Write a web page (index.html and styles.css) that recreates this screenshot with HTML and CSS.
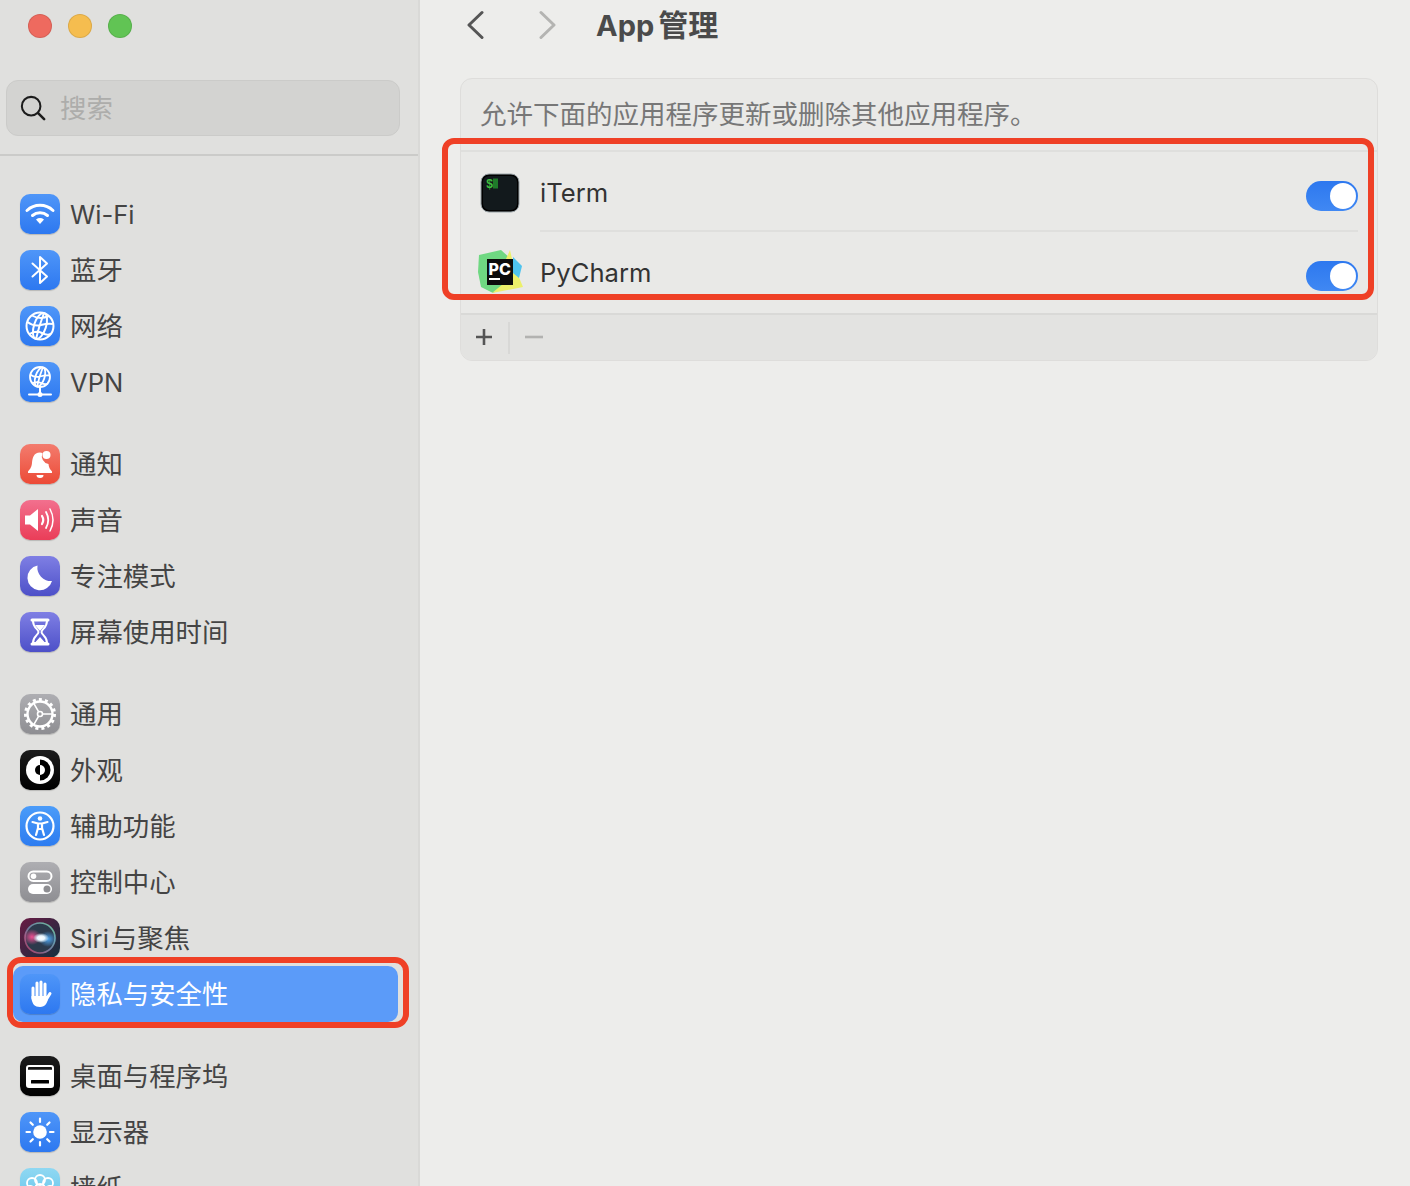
FILE: index.html
```html
<!DOCTYPE html>
<html lang="zh-CN">
<head>
<meta charset="utf-8">
<title>App 管理</title>
<link rel="stylesheet" href="styles.css">
</head>
<body>
<div class="window">
  <aside class="sidebar">
    <div class="lights">
      <span class="light red"></span><span class="light yellow"></span><span class="light green"></span>
    </div>
    <div class="search">
      <svg class="search-icon" viewBox="0 0 28 28" width="26" height="26"><circle cx="12" cy="12" r="10" fill="none" stroke="#1c1c1c" stroke-width="2.2"/><path d="M19.5 19.5 L26 26" stroke="#1c1c1c" stroke-width="2.8" stroke-linecap="round"/></svg>
      <span class="search-text">搜索</span>
    </div>
    <div class="rule"></div>
    <nav class="nav">
      <div class="group">
        <div class="row"><span class="ico blue"><svg viewBox="0 0 40 40"><g fill="none" stroke="#fff" stroke-width="3" stroke-linecap="round"><path d="M7 16.5 A19 19 0 0 1 33 16.5"/><path d="M12.5 21.5 A11.5 11.5 0 0 1 27.5 21.5"/></g><path d="M16 25.5 A7 7 0 0 1 24 25.5 L20 30Z" fill="#fff"/></svg></span><span class="label lat">Wi-Fi</span></div>
        <div class="row"><span class="ico blue"><svg viewBox="0 0 40 40"><path d="M12.5 13.5 L27 26.5 L20 33 V7 L27 13.5 L12.5 26.5" fill="none" stroke="#fff" stroke-width="2" stroke-linejoin="round" stroke-linecap="round"/></svg></span><span class="label">蓝牙</span></div>
        <div class="row"><span class="ico blue"><svg viewBox="0 0 40 40"><g fill="none" stroke="#fff" stroke-width="2"><circle cx="20" cy="20" r="13.5"/><ellipse cx="20" cy="20" rx="6" ry="13.5" transform="rotate(18 20 20)"/><path d="M24 7 Q19 20 16 33M7.5 16 Q14 21 21 19 T33 18M9.5 28 Q16 24 22 27 T31 27.5M12 9.5 Q20 14 29 10"/></g></svg></span><span class="label">网络</span></div>
        <div class="row"><span class="ico blue"><svg viewBox="0 0 40 40"><g fill="none" stroke="#fff" stroke-width="1.8"><circle cx="20" cy="15" r="10"/><ellipse cx="20" cy="15" rx="4.5" ry="10" transform="rotate(18 20 15)"/><path d="M23 5 Q19 15 17 25M10 12.5 Q15 16 20 14.5 T30 13.5M12 21.5 Q17 19 21 21 T28 21.5"/></g><path d="M20 25V32M9 32.5H31" stroke="#fff" stroke-width="2" stroke-linecap="round"/><circle cx="20" cy="32.5" r="2.5" fill="#fff"/></svg></span><span class="label lat">VPN</span></div>
      </div>
      <div class="group">
        <div class="row"><span class="ico coral"><svg viewBox="0 0 40 40"><path d="M20 8.5 C13.5 8.5 12.5 14 12 19 C11.5 24 9.5 25.5 8 27.5 V29 H32 V27.5 C30.5 25.5 29 24.5 28.5 20 A8 8 0 0 1 22.5 9Z" fill="#fff"/><path d="M16.5 31 H23.5 A3.5 3 0 0 1 16.5 31Z" fill="#fff"/><circle cx="26.5" cy="11" r="4" fill="#fff"/></svg></span><span class="label">通知</span></div>
        <div class="row"><span class="ico pink"><svg viewBox="0 0 40 40"><path d="M5 15.5 H10 L18 9 V31 L10 24.5 H5Z" fill="#fff"/><g fill="none" stroke="#fff" stroke-linecap="round"><path d="M22 16 Q24.5 20 22 24" stroke-width="2.2"/><path d="M26 12 Q30.5 20 26 28" stroke-width="1.8"/><path d="M30 9 Q36 20 30 31" stroke-width="1.5"/></g></svg></span><span class="label">声音</span></div>
        <div class="row"><span class="ico indigo"><svg viewBox="0 0 40 40"><path d="M17.5 9.5 A12.5 12.5 0 1 0 32 25 A13.5 13.5 0 0 1 17.5 9.5Z" fill="#fff"/></svg></span><span class="label">专注模式</span></div>
        <div class="row"><span class="ico indigo"><svg viewBox="0 0 40 40"><path d="M12 8H28M12 32H28" stroke="#fff" stroke-width="3" stroke-linecap="round"/><path d="M13 9 C13 16 18.5 17 18.5 20 C18.5 23 13 24 13 31 H27 C27 24 21.5 23 21.5 20 C21.5 17 27 16 27 9" fill="none" stroke="#fff" stroke-width="2"/><path d="M15 13H25L20 19ZM15.5 30 L20 25 L24.5 30Z" fill="#fff"/></svg></span><span class="label">屏幕使用时间</span></div>
      </div>
      <div class="group">
        <div class="row"><span class="ico gray"><svg viewBox="0 0 40 40"><circle cx="20" cy="20" r="12.5" fill="none" stroke="#fff" stroke-width="2.4"/><circle cx="20" cy="20" r="14.5" fill="none" stroke="#fff" stroke-width="3" stroke-dasharray="3 3.07"/><circle cx="20" cy="20" r="2.5" fill="none" stroke="#fff" stroke-width="1.6"/><path d="M22.5 20H32M18.7 17.8 13.5 8.8M18.7 22.2 13.5 31.2" stroke="#fff" stroke-width="1.6"/></svg></span><span class="label">通用</span></div>
        <div class="row"><span class="ico black"><svg viewBox="0 0 40 40"><circle cx="20" cy="20" r="14" fill="#fff"/><path d="M20 9.5 A10.5 10.5 0 0 1 20 30.5Z" fill="#000"/><path d="M20 15 A5 5 0 0 0 20 25Z" fill="#000"/><path d="M20 15 A5 5 0 0 1 20 25Z" fill="#fff"/></svg></span><span class="label">外观</span></div>
        <div class="row"><span class="ico sky"><svg viewBox="0 0 40 40"><circle cx="20" cy="20" r="13.5" fill="none" stroke="#fff" stroke-width="2.2"/><circle cx="20" cy="12.5" r="2.3" fill="#fff"/><path d="M12.5 16 L18 17.5 V22 L16 29 M27.5 16 L22 17.5 V22 L24 29 M18 17.5H22 M18 23H22" fill="none" stroke="#fff" stroke-width="2.2" stroke-linecap="round" stroke-linejoin="round"/></svg></span><span class="label">辅助功能</span></div>
        <div class="row"><span class="ico gray"><svg viewBox="0 0 40 40"><rect x="8.5" y="9.5" width="23" height="9.5" rx="4.75" fill="none" stroke="#fff" stroke-width="2"/><circle cx="13.5" cy="14.25" r="2.8" fill="#fff"/><rect x="8" y="22" width="24" height="10" rx="5" fill="#fff"/><circle cx="27" cy="27" r="3.5" fill="#8e8e92"/></svg></span><span class="label">控制中心</span></div>
        <div class="row"><span class="ico siri"><svg viewBox="0 0 40 40"><defs><linearGradient id="siriRing" x1="0" y1="1" x2="1" y2="0"><stop offset="0" stop-color="#b03a62"/><stop offset="0.5" stop-color="#6d7fa0"/><stop offset="1" stop-color="#6fc6a0"/></linearGradient><radialGradient id="siriPink"><stop offset="0" stop-color="#ef4f92"/><stop offset="1" stop-color="#ef4f92" stop-opacity="0"/></radialGradient><radialGradient id="siriBlue"><stop offset="0" stop-color="#4ea5ee"/><stop offset="1" stop-color="#4ea5ee" stop-opacity="0"/></radialGradient><radialGradient id="siriWhite"><stop offset="0" stop-color="#fff"/><stop offset="0.45" stop-color="#e8f6ff"/><stop offset="1" stop-color="#e8f6ff" stop-opacity="0"/></radialGradient></defs><circle cx="20" cy="20" r="15" fill="#2c3a4c" stroke="url(#siriRing)" stroke-width="1.6"/><ellipse cx="12" cy="19" rx="9" ry="8" fill="url(#siriPink)"/><ellipse cx="28" cy="21" rx="9" ry="8" fill="url(#siriBlue)"/><ellipse cx="21" cy="20" rx="8" ry="5" fill="url(#siriWhite)"/></svg></span><span class="label"><span class="siri-name">Siri</span>与聚焦</span></div>
        <div class="row selected"><span class="ico blue"><svg viewBox="0 0 40 40"><path d="M13 14V24M17 9V22M21 8V22M25 10V24M26 26 L30 19.5" fill="none" stroke="#fff" stroke-width="3" stroke-linecap="round"/><path d="M11.5 22 H26.5 V26 L28 25 C27 29 25.5 33 20 33 C14.5 33 12.5 30 11.5 25Z" fill="#fff"/></svg></span><span class="label">隐私与安全性</span></div>
      </div>
      <div class="group">
        <div class="row"><span class="ico black"><svg viewBox="0 0 40 40"><rect x="7" y="10" width="26" height="21" rx="2" fill="none" stroke="#fff" stroke-width="2"/><path d="M7 14.5H33" stroke="#fff" stroke-width="1.5"/><rect x="8" y="15" width="24" height="15" fill="#fff"/><rect x="11" y="24" width="18" height="3.5" rx="0.5" fill="#000"/></svg></span><span class="label">桌面与程序坞</span></div>
        <div class="row"><span class="ico blue"><svg viewBox="0 0 40 40"><circle cx="20" cy="20" r="6.8" fill="#fff"/><path d="M20 6.5V10M20 30V33.5M6.5 20H10M30 20H33.5M10.5 10.5 12.8 12.8M27.2 27.2 29.5 29.5M29.5 10.5 27.2 12.8M12.8 27.2 10.5 29.5" stroke="#fff" stroke-width="2.2" stroke-linecap="round"/></svg></span><span class="label">显示器</span></div>
        <div class="row"><span class="ico cyan"><svg viewBox="0 0 40 40"><g fill="none" stroke="#fff" stroke-width="1.8"><circle cx="20" cy="12" r="5"/><circle cx="12" cy="15" r="5"/><circle cx="28" cy="15" r="5"/><circle cx="10" cy="23" r="5"/><circle cx="30" cy="23" r="5"/><circle cx="20" cy="21" r="5"/></g></svg></span><span class="label">墙纸</span></div>
      </div>
    </nav>
  </aside>
  <main class="main">
    <header class="toolbar">
      <svg class="chev" viewBox="0 0 18 30" width="18" height="30"><path d="M16 2.5 L3 15 L16 27.5" fill="none" stroke="#555" stroke-width="3" stroke-linecap="round" stroke-linejoin="round"/></svg>
      <svg class="chev fwd" viewBox="0 0 18 30" width="18" height="30"><path d="M2 2.5 L15 15 L2 27.5" fill="none" stroke="#b4b4b2" stroke-width="3" stroke-linecap="round" stroke-linejoin="round"/></svg>
      <h1 class="title"><span class="title-latin">App</span>管理</h1>
    </header>
    <section class="card">
      <div class="card-head">允许下面的应用程序更新或删除其他应用程序。</div>
      <div class="app first">
        <span class="app-icon"><svg viewBox="0 0 40 40" width="40" height="40"><rect x="2" y="2" width="36" height="36" rx="7" fill="#12191c" stroke="#000" stroke-width="2"/><rect x="1" y="1" width="38" height="38" rx="8" fill="none" stroke="#9aa4a8" stroke-width="1"/><text class="dollar" x="6" y="14.5">$</text><rect x="13" y="5.5" width="5" height="10" fill="#1f7a2a"/></svg></span>
        <span class="app-name">iTerm</span>
        <span class="toggle"><span class="knob"></span></span>
      </div>
      <div class="sep"></div>
      <div class="app second">
        <span class="app-icon"><svg viewBox="0 0 46 46" width="46" height="46"><path d="M2 6 L24 1 L34 10 L30 36 L16 44 L4 38 L1 23Z" fill="#6fd882"/><path d="M33 1 L36 14 L46 38 L15 44 L26 35 L29 10Z" fill="#ecf06a"/><path d="M36 8 L45 17 L42 29 L36 24Z" fill="#4fc3ee"/><rect x="10" y="10" width="26" height="26" fill="#0c0c0c"/><text class="pc" x="11.5" y="25.5">PC</text><rect x="12" y="29" width="11" height="2" fill="#fff"/></svg></span>
        <span class="app-name">PyCharm</span>
        <span class="toggle"><span class="knob"></span></span>
      </div>
      <div class="card-foot">
        <span class="foot-btn"><svg viewBox="0 0 18 18" width="18" height="18"><path d="M9 1V17M1 9H17" stroke="#555" stroke-width="2.6"/></svg></span>
        <span class="foot-sep"></span>
        <span class="foot-btn minus"><svg viewBox="0 0 18 18" width="18" height="18"><path d="M0 9H18" stroke="#b2b2b0" stroke-width="2.6"/></svg></span>
      </div>
    </section>
  </main>
  <div class="mark mark-side"></div>
  <div class="mark mark-main"></div>
</div>
</body>
</html>
```

FILE: styles.css
```css
* { box-sizing: border-box; }
html, body { margin: 0; padding: 0; }
body {
  font-family: Inter, "Noto Sans CJK SC", "Noto Sans", sans-serif;
  color: #444;
}
.window {
  position: relative;
  display: flex;
  width: 1410px;
  height: 1186px;
  overflow: hidden;
  background: #ededeb;
}
.sidebar {
  flex: 0 0 420px;
  height: 100%;
  overflow: hidden;
  background: #e0e0de;
  border-right: 2px solid #d9d9d7;
}
.lights {
  display: flex;
  gap: 16px;
  padding: 14px 0 0 28px;
}
.light {
  width: 24px;
  height: 24px;
  border-radius: 50%;
  border: 1px solid rgba(0, 0, 0, 0.1);
}
.red { background: #ee6a5f; }
.yellow { background: #f5bd4f; }
.green { background: #61c454; }
.search {
  display: flex;
  align-items: center;
  gap: 14px;
  width: 394px;
  height: 56px;
  margin: 42px 0 0 6px;
  padding-left: 13px;
  background: #d3d3d1;
  border: 1px solid #cbcbc9;
  border-radius: 12px;
}
.search-icon { flex: none; }
.search-text {
  font-size: 26.4px;
  line-height: 40px;
  color: #adadab;
}
.rule {
  height: 2px;
  margin-top: 18px;
  background: #cbcbc9;
}
.nav { padding-top: 30px; }
.group { margin-bottom: 26px; }
.row {
  display: flex;
  align-items: center;
  gap: 10px;
  width: 385px;
  height: 56px;
  margin-left: 13px;
  padding-left: 7px;
  font-size: 26.4px;
  white-space: nowrap;
  border-radius: 10px;
}
.label { line-height: 40px; }
.label.lat {
  padding-top: 2px;
  font-size: 25.6px;
}
.siri-name {
  margin-right: 2px;
  font-size: 25.6px;
}
.row.selected {
  background: #5b9bf9;
  color: #fff;
}
.ico {
  flex: none;
  display: block;
  width: 40px;
  height: 40px;
  border-radius: 10px;
  box-shadow: 0 1px 1px rgba(0, 0, 0, 0.18);
}
.ico svg { display: block; width: 40px; height: 40px; }
.blue { background: linear-gradient(#4f96f8, #2d78f0); }
.coral { background: linear-gradient(#f37c6e, #ec4a36); }
.pink { background: linear-gradient(#f2708e, #ea3d58); }
.indigo { background: linear-gradient(#7f7fe4, #4d50c8); }
.gray { background: linear-gradient(#aeaeb2, #8e8e92); }
.black { background: linear-gradient(#1c1c1c, #000); }
.sky { background: linear-gradient(#4b9cf9, #2d7cf0); }
.siri { background: linear-gradient(135deg, #6a1a44, #12303f); }
.cyan { background: linear-gradient(#8fd8f2, #62c2ea); }
.main {
  flex: 1;
  min-width: 0;
}
.toolbar {
  display: flex;
  align-items: center;
  height: 52px;
  padding-left: 46px;
}
.chev { flex: none; margin-top: -2px; }
.fwd { margin-left: 55px; }
.title {
  margin: -6px 0 0 39px;
  font-size: 30px;
  font-weight: 700;
  color: #4a4a4a;
  white-space: nowrap;
}
.title-latin {
  margin-right: 4px;
  font-size: 29px;
}
.card {
  margin: 26px 32px 0 40px;
  height: 283px;
  background: #e9e9e7;
  border: 1px solid #dedddb;
  border-radius: 12px;
  overflow: hidden;
}
.card-head {
  height: 73px;
  padding: 14px 0 0 19px;
  font-size: 26.5px;
  line-height: 42px;
  color: #777;
  border-bottom: 2px solid #dfdfdd;
}
.app {
  display: flex;
  align-items: center;
  height: 81px;
  padding: 0 19px;
  font-size: 25.6px;
  color: #333;
}
.app.first {
  height: 78px;
  padding-top: 4px;
}
.first .app-name { margin-top: -2px; }
.app-icon {
  flex: none;
  display: flex;
  justify-content: center;
  align-items: center;
  width: 40px;
  height: 40px;
}
.second .app-icon { margin-top: -1px; }
.app-icon svg { flex: none; display: block; }
.app-name {
  flex: 1;
  margin-left: 20px;
}
.dollar {
  font-family: "Liberation Mono", monospace;
  font-size: 12px;
  font-weight: 700;
  fill: #3fbf3f;
}
.pc {
  font-family: Inter, sans-serif;
  font-size: 16px;
  font-weight: 800;
  fill: #fff;
}
.toggle {
  flex: none;
  display: flex;
  align-items: center;
  justify-content: flex-end;
  width: 52px;
  height: 30px;
  margin-top: 6px;
  padding-right: 2px;
  border-radius: 15px;
  background: linear-gradient(#2d78ef, #4088f3);
}
.knob {
  width: 26px;
  height: 26px;
  border-radius: 50%;
  background: #fff;
}
.sep {
  height: 2px;
  margin: 0 19px 0 79px;
  background: #dfdfdd;
}
.card-foot {
  display: flex;
  align-items: center;
  height: 47px;
  background: #e3e3e1;
  border-top: 2px solid #d9d9d7;
}
.foot-btn {
  display: flex;
  align-items: center;
  justify-content: center;
  width: 46px;
  height: 30px;
  margin-top: -2px;
}
.foot-sep {
  width: 2px;
  height: 32px;
  margin-left: 1px;
  background: #d8d8d6;
}
.minus { width: 48px; }
.mark {
  position: absolute;
  border: 6px solid #ef4026;
}
.mark-side {
  left: 7px;
  top: 957px;
  width: 402px;
  height: 71px;
  border-radius: 14px;
}
.mark-main {
  left: 442px;
  top: 138px;
  width: 932px;
  height: 162px;
  border-radius: 12px;
}
```
